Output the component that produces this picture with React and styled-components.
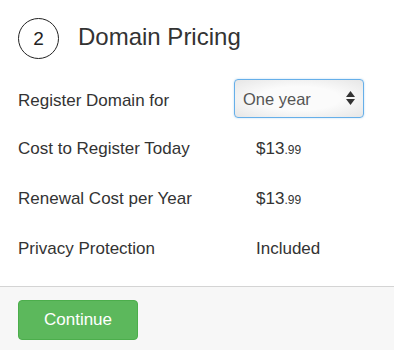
import React from 'react';
import styled, { createGlobalStyle } from 'styled-components';

const GlobalStyle = createGlobalStyle`
  body {
    margin: 0;
    background: #fff;
    font-family: "Liberation Sans", Arial, sans-serif;
    color: #333;
  }
`;

const Panel = styled.div`
  width: 394px;
  height: 350px;
  display: flex;
  flex-direction: column;
  overflow: hidden;
`;

const Body = styled.div`
  padding: 18px 18px 18px 18px;
  display: flex;
  flex-direction: column;
`;

const Header = styled.div`
  display: flex;
  align-items: center;
  gap: 19px;
  margin-bottom: 20px;
`;

const StepCircle = styled.div`
  width: 39px;
  height: 39px;
  border: 1px solid #222;
  border-radius: 50%;
  display: flex;
  align-items: center;
  justify-content: center;
  font-size: 19px;
  color: #222;
`;

const Title = styled.h2`
  margin: 0;
  font-size: 24px;
  font-weight: normal;
  color: #333;
  position: relative;
  top: -2px;
`;

const Rows = styled.div`
  display: flex;
  flex-direction: column;
  gap: 11px;
`;

const Row = styled.div`
  display: grid;
  grid-template-columns: 216px 1fr;
  align-items: center;
  min-height: 39px;
  font-size: 17px;
`;

const Label = styled.div`
  color: #333;
  position: relative;
  top: ${(p) => (p.$first ? '2px' : '0')};
`;

const Value = styled.div`
  padding-left: 22px;
  color: #333;
`;

const Cents = styled.span`
  font-size: 12px;
`;

const SelectWrap = styled.div`
  position: relative;
  width: 130px;
  height: 39px;
`;

const Select = styled.select`
  appearance: none;
  -webkit-appearance: none;
  width: 100%;
  height: 100%;
  box-sizing: border-box;
  border: 1px solid #66afe9;
  border-radius: 4px;
  padding: 0 0 0 8px;
  font-family: inherit;
  font-size: 16.5px;
  color: #555;
  background: radial-gradient(ellipse at center, #fbfbfb 45%, #e6e6e6 100%);
  box-shadow: 0 0 2px rgba(102, 175, 233, 0.5);
  outline: none;
`;

const Arrows = styled.svg`
  position: absolute;
  right: 9px;
  top: 12px;
  pointer-events: none;
`;

const Footer = styled.div`
  flex: 1;
  border-top: 1px solid #d4d4d4;
  background: #f7f7f7;
  padding: 13px 18px;
`;

const Button = styled.button`
  width: 120px;
  height: 40px;
  background: #5cb85c;
  border: 1px solid #4cae4c;
  border-radius: 4px;
  color: #fff;
  font-family: inherit;
  font-size: 17px;
  cursor: pointer;
`;

const rows = [
  { label: 'Cost to Register Today', dollars: '$13', cents: '.99' },
  { label: 'Renewal Cost per Year', dollars: '$13', cents: '.99' },
  { label: 'Privacy Protection', dollars: 'Included' },
];

export default function App() {
  return (
    <>
      <GlobalStyle />
      <Panel>
        <Body>
          <Header>
            <StepCircle>2</StepCircle>
            <Title>Domain Pricing</Title>
          </Header>
          <Rows>
            <Row>
              <Label $first>Register Domain for</Label>
              <SelectWrap>
                <Select defaultValue="1">
                  <option value="1">One year</option>
                  <option value="2">Two years</option>
                </Select>
                <Arrows width="9" height="14" viewBox="0 0 9 14">
                  <path d="M4.5 0 L9 6 L0 6 Z" fill="#333" />
                  <path d="M4.5 14 L9 8 L0 8 Z" fill="#333" />
                </Arrows>
              </SelectWrap>
            </Row>
            {rows.map((r) => (
              <Row key={r.label}>
                <Label>{r.label}</Label>
                <Value>
                  {r.dollars}
                  {r.cents && <Cents>{r.cents}</Cents>}
                </Value>
              </Row>
            ))}
          </Rows>
        </Body>
        <Footer>
          <Button>Continue</Button>
        </Footer>
      </Panel>
    </>
  );
}
